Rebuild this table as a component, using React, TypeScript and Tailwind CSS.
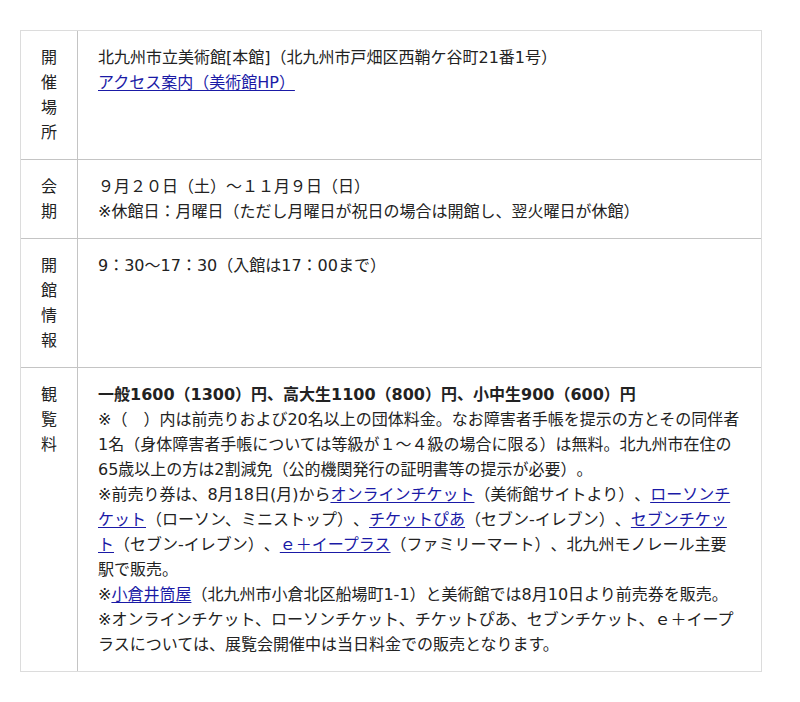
import React from "react";

const A = ({ children }: { children: React.ReactNode }) => (
  <a href="#" className="text-[#1a1aa6] underline underline-offset-2">
    {children}
  </a>
);

function Row({
  label,
  children,
  last,
}: {
  label: string;
  children: React.ReactNode;
  last?: boolean;
}) {
  return (
    <div className={`grid grid-cols-[57px_1fr] ${last ? "" : "border-b border-[#c4c4c4]"}`}>
      <div className="border-r border-[#c4c4c4] py-[14px] text-center flex flex-col items-center">
        {label.split("").map((c, i) => (
          <span key={i}>{c}</span>
        ))}
      </div>
      <div className="py-[14px] pl-[20px] pr-[20px]">{children}</div>
    </div>
  );
}

export default function App() {
  return (
    <div
      className="bg-white w-[800px] h-[702px] pt-[30px] pl-[20px] text-[16px] leading-[25px] text-[#222] [text-spacing-trim:space-all]"
      style={{ fontFamily: '"DejaVu Sans", "Noto Sans CJK JP", sans-serif' }}
    >
      <div className="w-[742px] border border-[#dcdcdc]">
        <Row label="開催場所">
          <div>北九州市立美術館[本館]（北九州市戸畑区西鞘ケ谷町21番1号）</div>
          <div>
            <A>アクセス案内（美術館HP）</A>
          </div>
        </Row>
        <Row label="会期">
          <div>９月２０日（土）～１１月９日（日）</div>
          <div>※休館日：月曜日（ただし月曜日が祝日の場合は開館し、翌火曜日が休館）</div>
        </Row>
        <Row label="開館情報">
          <div>9：30～17：30（入館は17：00まで）</div>
        </Row>
        <Row label="観覧料" last>
          <div className="font-bold">一般1600（1300）円、高大生1100（800）円、小中生900（600）円</div>
          <div>
            ※（　）内は前売りおよび20名以上の団体料金。なお障害者手帳を提示の方とその同伴者1名（身体障害者手帳については等級が１～４級の場合に限る）は無料。北九州市在住の65歳以上の方は2割減免（公的機関発行の証明書等の提示が必要）。
          </div>
          <div>
            ※前売り券は、8月18日(月)から<A>オンラインチケット</A>（美術館サイトより）、<A>ローソンチケット</A>（ローソン、ミニストップ）、<A>チケットぴあ</A>（セブン-イレブン）、<A>セブンチケット</A>（セブン-イレブン）、<A>ｅ＋イープラス</A>（ファミリーマート）、北九州モノレール主要駅で販売。
          </div>
          <div>
            ※<A>小倉井筒屋</A>（北九州市小倉北区船場町1-1）と美術館では8月10日より前売券を販売。
          </div>
          <div>
            ※オンラインチケット、ローソンチケット、チケットぴあ、セブンチケット、ｅ＋イープラスについては、展覧会開催中は当日料金での販売となります。
          </div>
        </Row>
      </div>
    </div>
  );
}
